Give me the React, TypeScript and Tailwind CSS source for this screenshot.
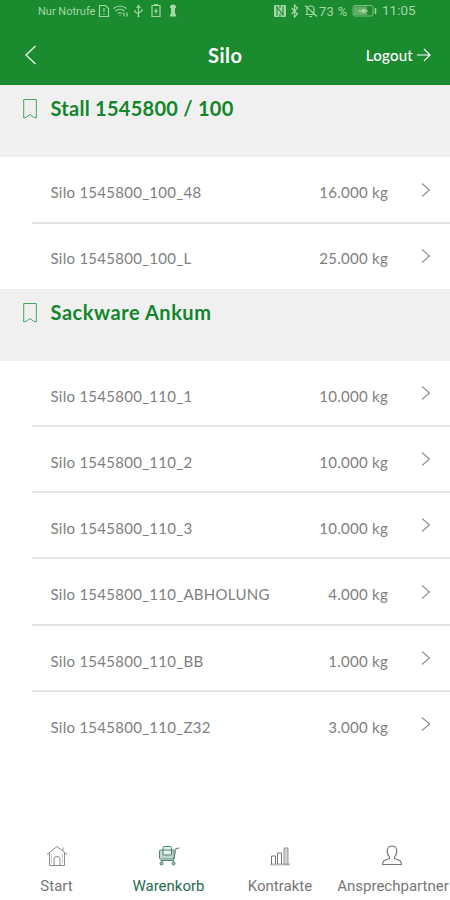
import React from 'react';

type Silo = { name: string; amount: string; height: string };

const stall: Silo[] = [
  { name: 'Silo 1545800_100_48', amount: '16.000 kg', height: 'h-[67px]' },
  { name: 'Silo 1545800_100_L', amount: '25.000 kg', height: 'h-[65px]' },
];

const sackware: Silo[] = [
  { name: 'Silo 1545800_110_1', amount: '10.000 kg', height: 'h-[66px]' },
  { name: 'Silo 1545800_110_2', amount: '10.000 kg', height: 'h-[66px]' },
  { name: 'Silo 1545800_110_3', amount: '10.000 kg', height: 'h-[66px]' },
  { name: 'Silo 1545800_110_ABHOLUNG', amount: '4.000 kg', height: 'h-[67px]' },
  { name: 'Silo 1545800_110_BB', amount: '1.000 kg', height: 'h-[66px]' },
  { name: 'Silo 1545800_110_Z32', amount: '3.000 kg', height: 'h-[66px]' },
];

function StatusBar() {
  return (
    <div className="flex h-[22px] items-center pr-[35px] pl-[38px] font-['Roboto',sans-serif] text-[#a3d8a5]">
      <span className="w-[59px] text-[11px] leading-none whitespace-nowrap">Nur Notrufe</span>
      <svg width="82" height="16" viewBox="0 0 82 16" fill="none" stroke="currentColor" strokeWidth="1.2">
        <path d="M2.500 2.500h6l3 3v8h-9zM7 5v4M7 10.500v1.500" />
        <path d="M16.500 5.500q6.500-5 13 0M18.500 8q4.500-3.500 9 0M21 10.500q2-1.500 4 0M22.500 12.500h1M27 9.500v4M30 9.500v4" />
        <path d="M41.500 14V3M39.500 5l2-2.500 2 2.500M38 7v2l3.500 2M45 6v2l-3.500 2M40.500 13.500h2" />
        <path d="M55 2.500h8v11h-8zM57 1.500h4M59 5.500v5M57 8h4" />
        <path d="M73 4a3 2.500 0 0 1 6 0v1h-1v5l1.500 3.500h-7l1.500-3.500V5h-1z" fill="currentColor" stroke="none" />
      </svg>
      <div className="ml-auto flex items-center">
        <svg width="45" height="16" viewBox="0 0 45 16" fill="none" stroke="currentColor" strokeWidth="1.200">
          <rect x="1" y="2" width="12" height="12" rx="1" fill="currentColor" stroke="none" />
          <path d="M4 13V4l6 8V3M7 2v3M7 11v3" stroke="#1b8b30" strokeWidth="1.100" />
          <path d="M18.500 5l6 6-3 3V2l3 3-6 6" />
          <path d="M32.500 11.500h10M34 11V6q0-3 3.500-3T41 6v5M36 13.500h3M32 2.500l12 11" />
        </svg>
        <span className="ml-[1px] w-[31px] text-[13px] leading-none tracking-[0.3px] whitespace-nowrap">73 %</span>
        <svg className="ml-[2px]" width="25" height="14" viewBox="0 0 25 14" fill="none" stroke="currentColor">
          <rect x="1" y="1.500" width="20" height="10.500" rx="2" stroke="#79bd7c" />
          <rect x="2" y="2.500" width="13" height="8.500" fill="#64ae69" stroke="none" />
          <path d="M6 7h10M9 7l2-1.500h2v3h-2z" fill="currentColor" />
          <path d="M23.500 4v6" strokeWidth="1.500" />
        </svg>
        <span className="ml-[5px] w-[33px] text-[13.5px] leading-none whitespace-nowrap">11:05</span>
      </div>
    </div>
  );
}

function SectionTitle({ title, spacing }: { title: string; spacing: string }) {
  return (
    <div className="flex h-[72px] shrink-0 items-start bg-[#f0f0f0] pt-[12px] pl-[23px] text-[#11862b]">
      <svg className="mt-0.5" width="14" height="22" viewBox="0 0 14 22" fill="none" stroke="#4aa362">
        <path d="M.7.500h12.600v18.500l-3-1L7 15.500 3.700 18l-3 1z" />
      </svg>
      <h2 className={`ml-[13.5px] text-[20px] leading-[22px] font-bold whitespace-nowrap ${spacing}`}>{title}</h2>
    </div>
  );
}

function SiloRow({ silo, last }: { silo: Silo; last: boolean }) {
  return (
    <div
      className={`ml-8 flex shrink-0 items-center border-b-2 pr-[19px] pl-[18.5px] text-[15px] leading-5 tracking-[0.27px] text-[#808080] ${silo.height} ${last ? 'border-transparent' : 'border-[#e5e5e5]'}`}
    >
      <span className="pt-[5px] whitespace-nowrap">{silo.name}</span>
      <span className="ml-auto pt-[5px] whitespace-nowrap">{silo.amount}</span>
      <svg className="ml-[33px]" width="10" height="16" viewBox="0 0 10 16" fill="none" stroke="#8c8c8c" strokeWidth="1.100">
        <path d="M1 1.500l7.500 6.500L1 14.500" />
      </svg>
    </div>
  );
}

function TabBar() {
  return (
    <nav className="mt-auto flex h-[57px] shrink-0 font-['Roboto',sans-serif] text-[15px] leading-5 text-[#777]">
      <div className="flex w-[113px] shrink-0 flex-col items-center">
        <svg width="22" height="24" viewBox="0 0 22 24" fill="none" stroke="#8a8a8a">
          <path d="M1 11.500L11 3.500l10 8M3.500 10v12.500h15V10M8 22v-6q0-2.500 3-2.500t3 2.500v6M17 7.500V4.500" />
          <path d="M5.500 10.500v10M16.500 10.500v10" stroke="#c8c8c8" />
        </svg>
        <span className="mt-[9px]">Start</span>
      </div>
      <div className="flex w-[111px] shrink-0 flex-col items-center text-[#276c53]">
        <svg width="22" height="24" viewBox="0 0 22 24" fill="none" stroke="#4e8671">
          <path d="M1.500 8q0-1 1-1h13.500v9H2.500q-1 0-1-1z" fill="#c3d9cf" />
          <path d="M5 4.500q0-1 1-1h6.500q1 0 1 1V12H5z" fill="#e6f0eb" />
          <path d="M5 7h8.500M2.500 17.500h13l2.500-12 3.500-.500M4.500 17.500l-1 2M15 17.500l1 2" />
          <circle cx="3.500" cy="20.500" r="1.500" fill="#9fc0b2" />
          <circle cx="15.500" cy="20.500" r="1.500" fill="#9fc0b2" />
        </svg>
        <span className="mt-[9px]">Warenkorb</span>
      </div>
      <div className="flex w-[112px] shrink-0 flex-col items-center">
        <svg width="22" height="24" viewBox="0 0 22 24" fill="none" stroke="currentColor">
          <path d="M1 21.500h20" stroke="#bbb" strokeWidth="2" />
          <path d="M2.500 21v-8h4v8M8.500 21V10h4v11" />
          <path d="M15 21V5h4v16z" fill="#d2d2d2" stroke="#999" />
        </svg>
        <span className="mt-[9px]">Kontrakte</span>
      </div>
      <div className="flex w-[114px] shrink-0 flex-col items-center">
        <svg className="-ml-0.5" width="22" height="24" viewBox="0 0 22 24" fill="none" stroke="currentColor" strokeWidth="1.100">
          <path d="M8.500 14C4.500 9 6 3 11 3s6.500 6 2.500 11v1.500c5 1.500 7 2.500 7 6H1.500c0-3.500 2-4.500 7-6z" />
        </svg>
        <span className="mt-[9px]">Ansprechpartner</span>
      </div>
    </nav>
  );
}

export default function App() {
  return (
    <main className="flex h-[900px] w-[450px] flex-col overflow-hidden bg-white font-['Lato',sans-serif]">
      <header className="h-[85px] shrink-0 bg-[#1b8b30]">
        <StatusBar />
        <div className="flex h-[65px] items-center pr-[19px] pl-[24px] text-white">
          <svg className="shrink-0" width="14" height="22" viewBox="0 0 14 22" fill="none" stroke="#dcf4dc" strokeWidth="1.500">
            <path d="M11.500 2L2 11l9.500 9" />
          </svg>
          <h1 className="mt-px ml-[170px] text-[20px] leading-6 font-bold tracking-[0.5px]">Silo</h1>
          <span className="ml-auto text-[15px] leading-5 font-medium tracking-[0.25px] whitespace-nowrap">Logout</span>
          <svg className="ml-[4px]" width="14" height="16" viewBox="0 0 14 16" fill="none" stroke="currentColor" strokeWidth="1.200">
            <path d="M0 8h13M7 2l6 6-6 6" />
          </svg>
        </div>
      </header>
      <SectionTitle title="Stall 1545800 / 100" spacing="tracking-[0.27px]" />
      {stall.map((silo, i) => (
        <SiloRow key={silo.name} silo={silo} last={i === stall.length - 1} />
      ))}
      <SectionTitle title="Sackware Ankum" spacing="tracking-[0.55px]" />
      {sackware.map((silo, i) => (
        <SiloRow key={silo.name} silo={silo} last={i === sackware.length - 1} />
      ))}
      <TabBar />
    </main>
  );
}
